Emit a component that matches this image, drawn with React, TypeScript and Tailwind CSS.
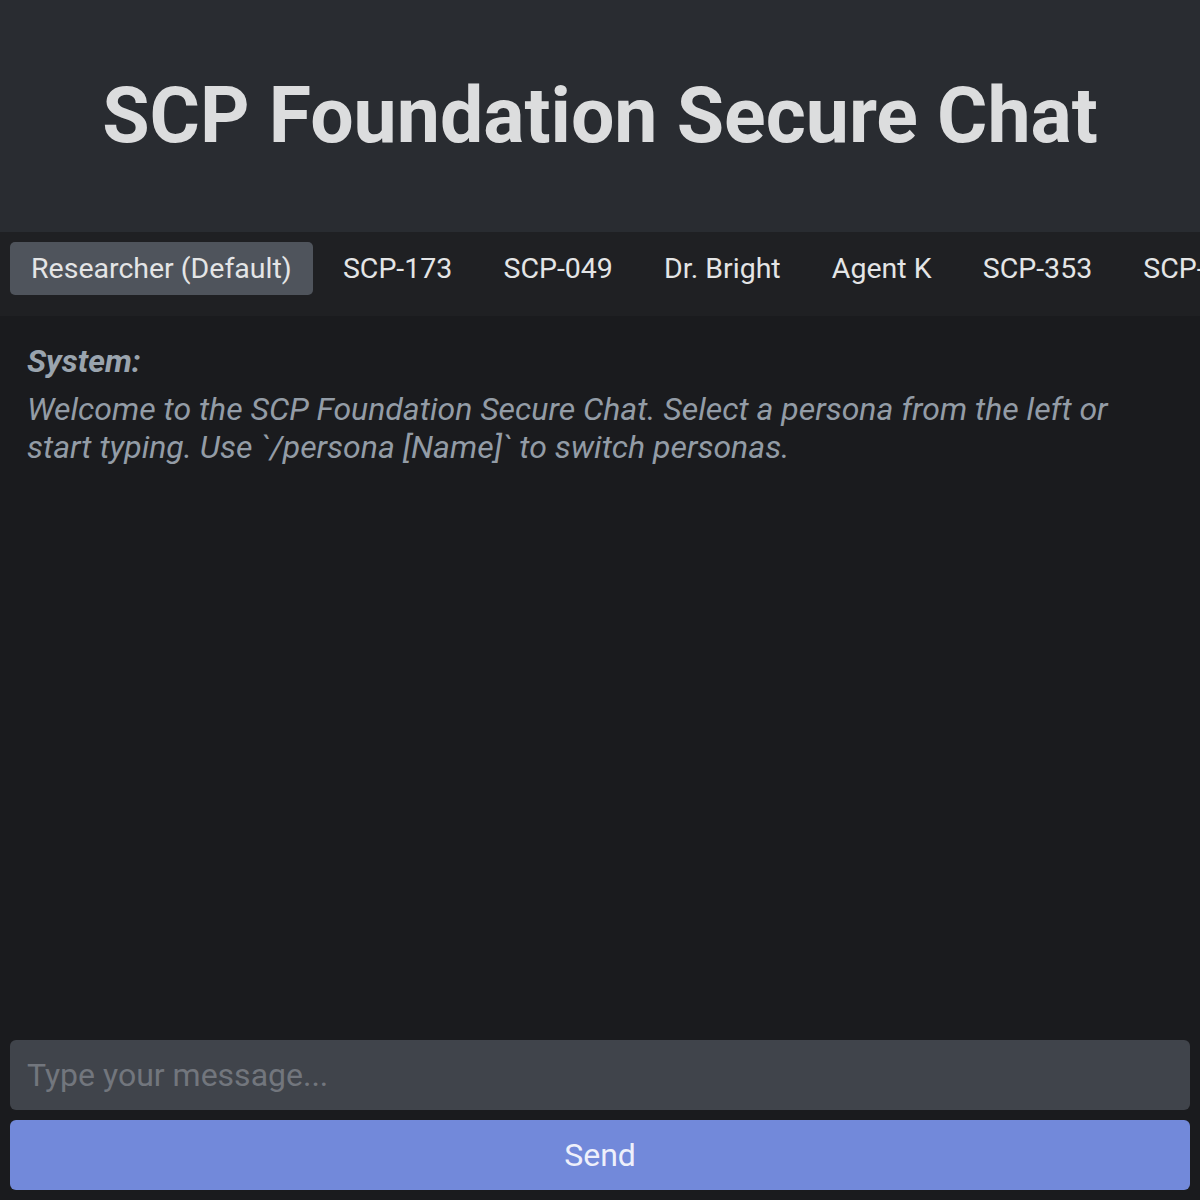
import React from "react";

const personas = ["Researcher (Default)", "SCP-173", "SCP-049", "Dr. Bright", "Agent K", "SCP-353", "SCP-096"];

export default function App() {
  return (
    <div
      className="flex h-[1200px] w-[1200px] flex-col overflow-hidden bg-[#1a1b1e]"
      style={{ fontFamily: "Roboto, 'Noto Sans', sans-serif" }}
    >
      <header className="flex h-[232px] shrink-0 items-center justify-center bg-[#292c31]">
        <h1 className="text-[77px] font-bold leading-none text-[#dcddde]">SCP Foundation Secure Chat</h1>
      </header>
      <nav className="flex h-[84px] shrink-0 items-start gap-[9.2px] overflow-hidden whitespace-nowrap bg-[#1f2023] px-[10px] pt-[10px]">
        {personas.map((p, i) => (
          <button
            key={p}
            className={`shrink-0 rounded-[5px] px-[21px] py-[9px] text-[28.5px] leading-[35px] text-[#e4e5e6] ${
              i === 0 ? "bg-[#4f545c]" : ""
            }`}
          >
            {p}
          </button>
        ))}
      </nav>
      <main className="flex-1 px-[27px] pt-[26px]">
        <div className="text-[32px] font-bold italic leading-[38px] text-[#9aa4ae]">System:</div>
        <p className="mt-[10px] text-[32px] italic leading-[38px] text-[#939ca6]">
          Welcome to the SCP Foundation Secure Chat. Select a persona from the left or
          <br />
          start typing. Use `/persona [Name]` to switch personas.
        </p>
      </main>
      <div className="flex shrink-0 flex-col gap-[10px] p-[10px]">
        <input
          placeholder="Type your message..."
          className="h-[70px] w-full rounded-[6px] bg-[#40444b] px-[17px] text-[32px] text-[#dcddde] outline-none placeholder:text-[#72767d]"
        />
        <button className="h-[70px] w-full rounded-[6px] bg-[#7289da] text-[32px] text-[#eef0fb]">Send</button>
      </div>
    </div>
  );
}
